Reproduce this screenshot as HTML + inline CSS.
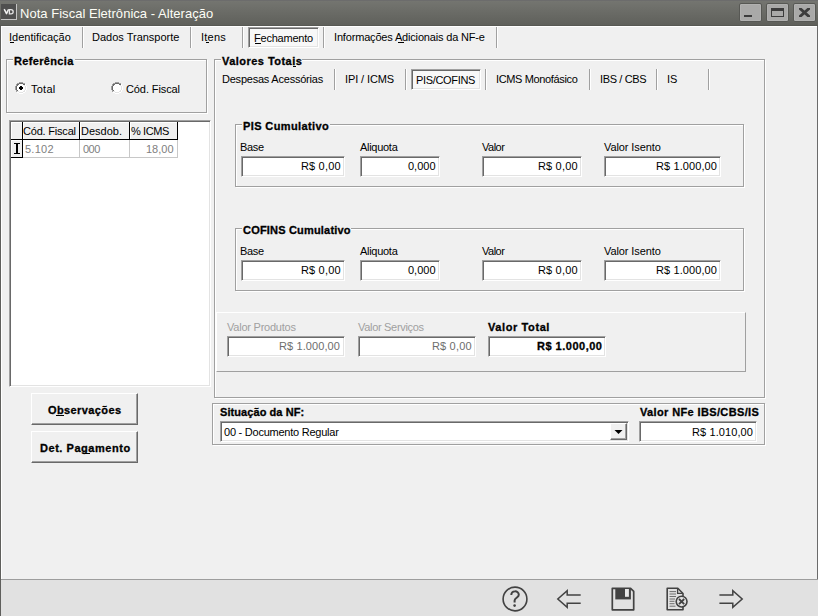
<!DOCTYPE html><html><head><meta charset="utf-8"><style>html,body{margin:0;padding:0;width:818px;height:616px;overflow:hidden;background:#f0f0f0;font-family:"Liberation Sans", sans-serif}#root div{position:absolute}.t{white-space:nowrap;font-family:"Liberation Sans", sans-serif}.tb{-webkit-text-stroke:0.3px currentColor}.tr{}</style></head><body><div id="root" style="position:absolute;left:0;top:0;width:818px;height:616px;overflow:hidden">
<div style="left:0px;top:0px;width:818px;height:26px;background:linear-gradient(#757671,#5e5f5a)"></div>
<div style="left:0px;top:0px;width:818px;height:1px;background:#6c6c6c"></div>
<div style="left:0px;top:25px;width:818px;height:1px;background:#575853"></div>
<div style="left:1px;top:4px;width:16px;height:16px;background:#4f4f4f;box-sizing:border-box;border-right:1px solid #c4c4c4;border-bottom:1px solid #c4c4c4"></div>
<svg style="position:absolute;left:0;top:0" width="20" height="22" viewBox="0 0 20 22"><path d="M4.2 9.2 L6.5 13.6 L8.6 9.2" fill="none" stroke="#f2f2f2" stroke-width="1.5" stroke-linejoin="round"/><path d="M9.4 9.6 H11 C13.9 9.6 13.9 13.9 11 13.9 H9.4 Z" fill="none" stroke="#e6e6e6" stroke-width="1.3"/></svg>
<div class="t tr" style="left:20px;top:3px;font-size:13px;line-height:21px;font-weight:normal;color:#fdfdf6;letter-spacing:0.03px;">Nota Fiscal Eletrônica - Alteração</div>
<div style="left:739px;top:3px;width:23px;height:19px;background:#a9a9a8;border-radius:2px;box-sizing:border-box;border:1px solid #575854;box-shadow:inset 0 0 0 1px #b1b1b0"></div>
<div style="left:766px;top:3px;width:23px;height:19px;background:#a9a9a8;border-radius:2px;box-sizing:border-box;border:1px solid #575854;box-shadow:inset 0 0 0 1px #b1b1b0"></div>
<div style="left:793px;top:3px;width:23px;height:19px;background:#a9a9a8;border-radius:2px;box-sizing:border-box;border:1px solid #575854;box-shadow:inset 0 0 0 1px #b1b1b0"></div>
<div style="left:744px;top:15px;width:8px;height:2px;background:#3c3c3c"></div>
<div style="left:771px;top:8px;width:13px;height:9px;box-sizing:border-box;border:1px solid #3c3c3c;border-top-width:3px"></div>
<svg style="position:absolute;left:799px;top:8px" width="11" height="9" viewBox="0 0 11 9"><path d="M-0.2 -0.6 L11.2 9.6 M11.2 -0.6 L-0.2 9.6" stroke="#3c3c3c" stroke-width="2.8"/></svg>
<div style="left:0px;top:26px;width:1px;height:590px;background:#5f5f5c"></div>
<div style="left:1px;top:26px;width:816px;height:1px;background:#ffffff"></div>
<div style="left:1px;top:26px;width:1px;height:553px;background:#ffffff"></div>
<div style="left:817px;top:26px;width:1px;height:554px;background:#6b6b6b"></div>
<div style="left:1px;top:579px;width:817px;height:37px;background:#e1e1e1"></div>
<div style="left:1px;top:579px;width:817px;height:1px;background:#9d9d9d"></div>
<div class="t tr" style="left:9px;top:27px;font-size:11px;line-height:20px;font-weight:normal;color:#000;letter-spacing:0.0px;">Identificação</div>
<div style="left:10px;top:42px;width:4px;height:1px;background:#000"></div>
<div style="left:82px;top:27px;width:1px;height:21px;background:#a0a0a0"></div>
<div style="left:83px;top:27px;width:1px;height:21px;background:#ffffff"></div>
<div class="t tr" style="left:92px;top:27px;font-size:11px;line-height:20px;font-weight:normal;color:#000;letter-spacing:0.0px;">Dados Transporte</div>
<div style="left:190px;top:27px;width:1px;height:21px;background:#a0a0a0"></div>
<div style="left:191px;top:27px;width:1px;height:21px;background:#ffffff"></div>
<div class="t tr" style="left:201px;top:27px;font-size:11px;line-height:20px;font-weight:normal;color:#000;letter-spacing:0.25px;">Itens</div>
<div style="left:206px;top:42px;width:3px;height:1px;background:#000"></div>
<div style="left:242px;top:27px;width:1px;height:21px;background:#a0a0a0"></div>
<div style="left:243px;top:27px;width:1px;height:21px;background:#ffffff"></div>
<div style="left:248px;top:27px;width:71px;height:21px;background:#f8f8f8;box-sizing:border-box;border:1px solid;border-color:#a0a0a0 #fff #fff #a0a0a0;box-shadow:inset 1px 1px 0 #696969, inset -1px -1px 0 #e3e3e3"></div>
<div class="t tr" style="left:254px;top:28px;font-size:11px;line-height:20px;font-weight:normal;color:#000;letter-spacing:-0.222px;">Fechamento</div>
<div style="left:255px;top:43px;width:6px;height:1px;background:#000"></div>
<div style="left:323px;top:27px;width:1px;height:21px;background:#a0a0a0"></div>
<div style="left:324px;top:27px;width:1px;height:21px;background:#ffffff"></div>
<div class="t tr" style="left:334px;top:27px;font-size:11px;line-height:20px;font-weight:normal;color:#000;letter-spacing:-0.172px;">Informações Adicionais da NF-e</div>
<div style="left:398px;top:42px;width:6px;height:1px;background:#000"></div>
<div style="left:496px;top:27px;width:1px;height:21px;background:#a0a0a0"></div>
<div style="left:497px;top:27px;width:1px;height:21px;background:#ffffff"></div>
<div style="left:7px;top:60px;width:201px;height:54px;box-shadow:inset 0 0 0 1px #ffffff"></div>
<div style="left:6px;top:59px;width:201px;height:54px;box-shadow:inset 0 0 0 1px #a0a0a0"></div>
<div style="left:13px;top:56px;width:62px;height:12px;background:#f0f0f0"></div>
<div class="t tb" style="left:14px;top:51px;font-size:11px;line-height:20px;font-weight:bold;color:#000;letter-spacing:0.333px;">Referência</div>
<svg style="position:absolute;left:15px;top:82px" width="12" height="12" shape-rendering="crispEdges"><rect x="4" y="0" width="1" height="1" fill="#a0a0a0"/><rect x="5" y="0" width="1" height="1" fill="#a0a0a0"/><rect x="6" y="0" width="1" height="1" fill="#a0a0a0"/><rect x="7" y="0" width="1" height="1" fill="#a0a0a0"/><rect x="2" y="1" width="1" height="1" fill="#a0a0a0"/><rect x="3" y="1" width="1" height="1" fill="#a0a0a0"/><rect x="4" y="1" width="1" height="1" fill="#696969"/><rect x="5" y="1" width="1" height="1" fill="#696969"/><rect x="6" y="1" width="1" height="1" fill="#696969"/><rect x="7" y="1" width="1" height="1" fill="#696969"/><rect x="8" y="1" width="1" height="1" fill="#a0a0a0"/><rect x="9" y="1" width="1" height="1" fill="#a0a0a0"/><rect x="1" y="2" width="1" height="1" fill="#a0a0a0"/><rect x="2" y="2" width="1" height="1" fill="#696969"/><rect x="3" y="2" width="1" height="1" fill="#696969"/><rect x="4" y="2" width="1" height="1" fill="#ffffff"/><rect x="5" y="2" width="1" height="1" fill="#ffffff"/><rect x="6" y="2" width="1" height="1" fill="#ffffff"/><rect x="7" y="2" width="1" height="1" fill="#ffffff"/><rect x="8" y="2" width="1" height="1" fill="#696969"/><rect x="9" y="2" width="1" height="1" fill="#696969"/><rect x="10" y="2" width="1" height="1" fill="#ffffff"/><rect x="1" y="3" width="1" height="1" fill="#a0a0a0"/><rect x="2" y="3" width="1" height="1" fill="#696969"/><rect x="3" y="3" width="1" height="1" fill="#ffffff"/><rect x="4" y="3" width="1" height="1" fill="#ffffff"/><rect x="5" y="3" width="1" height="1" fill="#ffffff"/><rect x="6" y="3" width="1" height="1" fill="#ffffff"/><rect x="7" y="3" width="1" height="1" fill="#ffffff"/><rect x="8" y="3" width="1" height="1" fill="#ffffff"/><rect x="9" y="3" width="1" height="1" fill="#e3e3e3"/><rect x="10" y="3" width="1" height="1" fill="#ffffff"/><rect x="0" y="4" width="1" height="1" fill="#a0a0a0"/><rect x="1" y="4" width="1" height="1" fill="#696969"/><rect x="2" y="4" width="1" height="1" fill="#ffffff"/><rect x="3" y="4" width="1" height="1" fill="#ffffff"/><rect x="4" y="4" width="1" height="1" fill="#ffffff"/><rect x="5" y="4" width="1" height="1" fill="#ffffff"/><rect x="6" y="4" width="1" height="1" fill="#ffffff"/><rect x="7" y="4" width="1" height="1" fill="#ffffff"/><rect x="8" y="4" width="1" height="1" fill="#ffffff"/><rect x="9" y="4" width="1" height="1" fill="#ffffff"/><rect x="10" y="4" width="1" height="1" fill="#e3e3e3"/><rect x="11" y="4" width="1" height="1" fill="#ffffff"/><rect x="0" y="5" width="1" height="1" fill="#a0a0a0"/><rect x="1" y="5" width="1" height="1" fill="#696969"/><rect x="2" y="5" width="1" height="1" fill="#ffffff"/><rect x="3" y="5" width="1" height="1" fill="#ffffff"/><rect x="4" y="5" width="1" height="1" fill="#ffffff"/><rect x="5" y="5" width="1" height="1" fill="#ffffff"/><rect x="6" y="5" width="1" height="1" fill="#ffffff"/><rect x="7" y="5" width="1" height="1" fill="#ffffff"/><rect x="8" y="5" width="1" height="1" fill="#ffffff"/><rect x="9" y="5" width="1" height="1" fill="#ffffff"/><rect x="10" y="5" width="1" height="1" fill="#e3e3e3"/><rect x="11" y="5" width="1" height="1" fill="#ffffff"/><rect x="0" y="6" width="1" height="1" fill="#a0a0a0"/><rect x="1" y="6" width="1" height="1" fill="#696969"/><rect x="2" y="6" width="1" height="1" fill="#ffffff"/><rect x="3" y="6" width="1" height="1" fill="#ffffff"/><rect x="4" y="6" width="1" height="1" fill="#ffffff"/><rect x="5" y="6" width="1" height="1" fill="#ffffff"/><rect x="6" y="6" width="1" height="1" fill="#ffffff"/><rect x="7" y="6" width="1" height="1" fill="#ffffff"/><rect x="8" y="6" width="1" height="1" fill="#ffffff"/><rect x="9" y="6" width="1" height="1" fill="#ffffff"/><rect x="10" y="6" width="1" height="1" fill="#e3e3e3"/><rect x="11" y="6" width="1" height="1" fill="#ffffff"/><rect x="0" y="7" width="1" height="1" fill="#a0a0a0"/><rect x="1" y="7" width="1" height="1" fill="#696969"/><rect x="2" y="7" width="1" height="1" fill="#ffffff"/><rect x="3" y="7" width="1" height="1" fill="#ffffff"/><rect x="4" y="7" width="1" height="1" fill="#ffffff"/><rect x="5" y="7" width="1" height="1" fill="#ffffff"/><rect x="6" y="7" width="1" height="1" fill="#ffffff"/><rect x="7" y="7" width="1" height="1" fill="#ffffff"/><rect x="8" y="7" width="1" height="1" fill="#ffffff"/><rect x="9" y="7" width="1" height="1" fill="#ffffff"/><rect x="10" y="7" width="1" height="1" fill="#e3e3e3"/><rect x="11" y="7" width="1" height="1" fill="#ffffff"/><rect x="1" y="8" width="1" height="1" fill="#a0a0a0"/><rect x="2" y="8" width="1" height="1" fill="#696969"/><rect x="3" y="8" width="1" height="1" fill="#ffffff"/><rect x="4" y="8" width="1" height="1" fill="#ffffff"/><rect x="5" y="8" width="1" height="1" fill="#ffffff"/><rect x="6" y="8" width="1" height="1" fill="#ffffff"/><rect x="7" y="8" width="1" height="1" fill="#ffffff"/><rect x="8" y="8" width="1" height="1" fill="#ffffff"/><rect x="9" y="8" width="1" height="1" fill="#e3e3e3"/><rect x="10" y="8" width="1" height="1" fill="#ffffff"/><rect x="1" y="9" width="1" height="1" fill="#a0a0a0"/><rect x="2" y="9" width="1" height="1" fill="#e3e3e3"/><rect x="3" y="9" width="1" height="1" fill="#e3e3e3"/><rect x="4" y="9" width="1" height="1" fill="#ffffff"/><rect x="5" y="9" width="1" height="1" fill="#ffffff"/><rect x="6" y="9" width="1" height="1" fill="#ffffff"/><rect x="7" y="9" width="1" height="1" fill="#ffffff"/><rect x="8" y="9" width="1" height="1" fill="#e3e3e3"/><rect x="9" y="9" width="1" height="1" fill="#e3e3e3"/><rect x="10" y="9" width="1" height="1" fill="#ffffff"/><rect x="2" y="10" width="1" height="1" fill="#ffffff"/><rect x="3" y="10" width="1" height="1" fill="#ffffff"/><rect x="4" y="10" width="1" height="1" fill="#e3e3e3"/><rect x="5" y="10" width="1" height="1" fill="#e3e3e3"/><rect x="6" y="10" width="1" height="1" fill="#e3e3e3"/><rect x="7" y="10" width="1" height="1" fill="#e3e3e3"/><rect x="8" y="10" width="1" height="1" fill="#ffffff"/><rect x="9" y="10" width="1" height="1" fill="#ffffff"/><rect x="4" y="11" width="1" height="1" fill="#ffffff"/><rect x="5" y="11" width="1" height="1" fill="#ffffff"/><rect x="6" y="11" width="1" height="1" fill="#ffffff"/><rect x="7" y="11" width="1" height="1" fill="#ffffff"/><rect x="5" y="4" width="1" height="1" fill="#000"/><rect x="6" y="4" width="1" height="1" fill="#000"/><rect x="4" y="5" width="1" height="1" fill="#000"/><rect x="5" y="5" width="1" height="1" fill="#000"/><rect x="6" y="5" width="1" height="1" fill="#000"/><rect x="7" y="5" width="1" height="1" fill="#000"/><rect x="4" y="6" width="1" height="1" fill="#000"/><rect x="5" y="6" width="1" height="1" fill="#000"/><rect x="6" y="6" width="1" height="1" fill="#000"/><rect x="7" y="6" width="1" height="1" fill="#000"/><rect x="5" y="7" width="1" height="1" fill="#000"/><rect x="6" y="7" width="1" height="1" fill="#000"/></svg>
<svg style="position:absolute;left:111px;top:82px" width="12" height="12" shape-rendering="crispEdges"><rect x="4" y="0" width="1" height="1" fill="#a0a0a0"/><rect x="5" y="0" width="1" height="1" fill="#a0a0a0"/><rect x="6" y="0" width="1" height="1" fill="#a0a0a0"/><rect x="7" y="0" width="1" height="1" fill="#a0a0a0"/><rect x="2" y="1" width="1" height="1" fill="#a0a0a0"/><rect x="3" y="1" width="1" height="1" fill="#a0a0a0"/><rect x="4" y="1" width="1" height="1" fill="#696969"/><rect x="5" y="1" width="1" height="1" fill="#696969"/><rect x="6" y="1" width="1" height="1" fill="#696969"/><rect x="7" y="1" width="1" height="1" fill="#696969"/><rect x="8" y="1" width="1" height="1" fill="#a0a0a0"/><rect x="9" y="1" width="1" height="1" fill="#a0a0a0"/><rect x="1" y="2" width="1" height="1" fill="#a0a0a0"/><rect x="2" y="2" width="1" height="1" fill="#696969"/><rect x="3" y="2" width="1" height="1" fill="#696969"/><rect x="4" y="2" width="1" height="1" fill="#ffffff"/><rect x="5" y="2" width="1" height="1" fill="#ffffff"/><rect x="6" y="2" width="1" height="1" fill="#ffffff"/><rect x="7" y="2" width="1" height="1" fill="#ffffff"/><rect x="8" y="2" width="1" height="1" fill="#696969"/><rect x="9" y="2" width="1" height="1" fill="#696969"/><rect x="10" y="2" width="1" height="1" fill="#ffffff"/><rect x="1" y="3" width="1" height="1" fill="#a0a0a0"/><rect x="2" y="3" width="1" height="1" fill="#696969"/><rect x="3" y="3" width="1" height="1" fill="#ffffff"/><rect x="4" y="3" width="1" height="1" fill="#ffffff"/><rect x="5" y="3" width="1" height="1" fill="#ffffff"/><rect x="6" y="3" width="1" height="1" fill="#ffffff"/><rect x="7" y="3" width="1" height="1" fill="#ffffff"/><rect x="8" y="3" width="1" height="1" fill="#ffffff"/><rect x="9" y="3" width="1" height="1" fill="#e3e3e3"/><rect x="10" y="3" width="1" height="1" fill="#ffffff"/><rect x="0" y="4" width="1" height="1" fill="#a0a0a0"/><rect x="1" y="4" width="1" height="1" fill="#696969"/><rect x="2" y="4" width="1" height="1" fill="#ffffff"/><rect x="3" y="4" width="1" height="1" fill="#ffffff"/><rect x="4" y="4" width="1" height="1" fill="#ffffff"/><rect x="5" y="4" width="1" height="1" fill="#ffffff"/><rect x="6" y="4" width="1" height="1" fill="#ffffff"/><rect x="7" y="4" width="1" height="1" fill="#ffffff"/><rect x="8" y="4" width="1" height="1" fill="#ffffff"/><rect x="9" y="4" width="1" height="1" fill="#ffffff"/><rect x="10" y="4" width="1" height="1" fill="#e3e3e3"/><rect x="11" y="4" width="1" height="1" fill="#ffffff"/><rect x="0" y="5" width="1" height="1" fill="#a0a0a0"/><rect x="1" y="5" width="1" height="1" fill="#696969"/><rect x="2" y="5" width="1" height="1" fill="#ffffff"/><rect x="3" y="5" width="1" height="1" fill="#ffffff"/><rect x="4" y="5" width="1" height="1" fill="#ffffff"/><rect x="5" y="5" width="1" height="1" fill="#ffffff"/><rect x="6" y="5" width="1" height="1" fill="#ffffff"/><rect x="7" y="5" width="1" height="1" fill="#ffffff"/><rect x="8" y="5" width="1" height="1" fill="#ffffff"/><rect x="9" y="5" width="1" height="1" fill="#ffffff"/><rect x="10" y="5" width="1" height="1" fill="#e3e3e3"/><rect x="11" y="5" width="1" height="1" fill="#ffffff"/><rect x="0" y="6" width="1" height="1" fill="#a0a0a0"/><rect x="1" y="6" width="1" height="1" fill="#696969"/><rect x="2" y="6" width="1" height="1" fill="#ffffff"/><rect x="3" y="6" width="1" height="1" fill="#ffffff"/><rect x="4" y="6" width="1" height="1" fill="#ffffff"/><rect x="5" y="6" width="1" height="1" fill="#ffffff"/><rect x="6" y="6" width="1" height="1" fill="#ffffff"/><rect x="7" y="6" width="1" height="1" fill="#ffffff"/><rect x="8" y="6" width="1" height="1" fill="#ffffff"/><rect x="9" y="6" width="1" height="1" fill="#ffffff"/><rect x="10" y="6" width="1" height="1" fill="#e3e3e3"/><rect x="11" y="6" width="1" height="1" fill="#ffffff"/><rect x="0" y="7" width="1" height="1" fill="#a0a0a0"/><rect x="1" y="7" width="1" height="1" fill="#696969"/><rect x="2" y="7" width="1" height="1" fill="#ffffff"/><rect x="3" y="7" width="1" height="1" fill="#ffffff"/><rect x="4" y="7" width="1" height="1" fill="#ffffff"/><rect x="5" y="7" width="1" height="1" fill="#ffffff"/><rect x="6" y="7" width="1" height="1" fill="#ffffff"/><rect x="7" y="7" width="1" height="1" fill="#ffffff"/><rect x="8" y="7" width="1" height="1" fill="#ffffff"/><rect x="9" y="7" width="1" height="1" fill="#ffffff"/><rect x="10" y="7" width="1" height="1" fill="#e3e3e3"/><rect x="11" y="7" width="1" height="1" fill="#ffffff"/><rect x="1" y="8" width="1" height="1" fill="#a0a0a0"/><rect x="2" y="8" width="1" height="1" fill="#696969"/><rect x="3" y="8" width="1" height="1" fill="#ffffff"/><rect x="4" y="8" width="1" height="1" fill="#ffffff"/><rect x="5" y="8" width="1" height="1" fill="#ffffff"/><rect x="6" y="8" width="1" height="1" fill="#ffffff"/><rect x="7" y="8" width="1" height="1" fill="#ffffff"/><rect x="8" y="8" width="1" height="1" fill="#ffffff"/><rect x="9" y="8" width="1" height="1" fill="#e3e3e3"/><rect x="10" y="8" width="1" height="1" fill="#ffffff"/><rect x="1" y="9" width="1" height="1" fill="#a0a0a0"/><rect x="2" y="9" width="1" height="1" fill="#e3e3e3"/><rect x="3" y="9" width="1" height="1" fill="#e3e3e3"/><rect x="4" y="9" width="1" height="1" fill="#ffffff"/><rect x="5" y="9" width="1" height="1" fill="#ffffff"/><rect x="6" y="9" width="1" height="1" fill="#ffffff"/><rect x="7" y="9" width="1" height="1" fill="#ffffff"/><rect x="8" y="9" width="1" height="1" fill="#e3e3e3"/><rect x="9" y="9" width="1" height="1" fill="#e3e3e3"/><rect x="10" y="9" width="1" height="1" fill="#ffffff"/><rect x="2" y="10" width="1" height="1" fill="#ffffff"/><rect x="3" y="10" width="1" height="1" fill="#ffffff"/><rect x="4" y="10" width="1" height="1" fill="#e3e3e3"/><rect x="5" y="10" width="1" height="1" fill="#e3e3e3"/><rect x="6" y="10" width="1" height="1" fill="#e3e3e3"/><rect x="7" y="10" width="1" height="1" fill="#e3e3e3"/><rect x="8" y="10" width="1" height="1" fill="#ffffff"/><rect x="9" y="10" width="1" height="1" fill="#ffffff"/><rect x="4" y="11" width="1" height="1" fill="#ffffff"/><rect x="5" y="11" width="1" height="1" fill="#ffffff"/><rect x="6" y="11" width="1" height="1" fill="#ffffff"/><rect x="7" y="11" width="1" height="1" fill="#ffffff"/></svg>
<div class="t tr" style="left:31px;top:79px;font-size:11px;line-height:20px;font-weight:normal;color:#000;letter-spacing:0.25px;">Total</div>
<div class="t tr" style="left:126px;top:79px;font-size:11px;line-height:20px;font-weight:normal;color:#000;letter-spacing:-0.1px;">Cód. Fiscal</div>
<div style="left:9px;top:120px;width:202px;height:267px;background:#fff;box-sizing:border-box;border:1px solid;border-color:#a0a0a0 #fff #fff #a0a0a0;box-shadow:inset 1px 1px 0 #696969, inset -1px -1px 0 #e3e3e3"></div>
<div style="left:11px;top:122px;width:12px;height:18px;background:#f0f0f0;box-sizing:border-box;border-right:1px solid #000;border-bottom:1px solid #000;box-shadow:inset 1px 1px 0 #fff"></div>
<div style="left:23px;top:122px;width:57px;height:18px;background:#f0f0f0;box-sizing:border-box;border-right:1px solid #000;border-bottom:1px solid #000;box-shadow:inset 1px 1px 0 #fff"></div>
<div style="left:80px;top:122px;width:50px;height:18px;background:#f0f0f0;box-sizing:border-box;border-right:1px solid #000;border-bottom:1px solid #000;box-shadow:inset 1px 1px 0 #fff"></div>
<div style="left:130px;top:122px;width:48px;height:18px;background:#f0f0f0;box-sizing:border-box;border-right:1px solid #000;border-bottom:1px solid #000;box-shadow:inset 1px 1px 0 #fff"></div>
<div class="t tr" style="left:23px;top:121px;font-size:11px;line-height:20px;font-weight:normal;color:#000;letter-spacing:-0.2px;">Cód. Fiscal</div>
<div class="t tr" style="left:81px;top:121px;font-size:11px;line-height:20px;font-weight:normal;color:#000;letter-spacing:0.0px;">Desdob.</div>
<div class="t tr" style="left:131px;top:121px;font-size:11px;line-height:20px;font-weight:normal;color:#000;letter-spacing:-0.4px;">% ICMS</div>
<div style="left:11px;top:140px;width:12px;height:18px;background:#f0f0f0;box-sizing:border-box;border-right:1px solid #000;border-bottom:1px solid #000;box-shadow:inset 1px 1px 0 #fff"></div>
<div style="left:23px;top:140px;width:57px;height:18px;box-sizing:border-box;border-right:1px solid #c8c8c8;border-bottom:1px solid #c8c8c8"></div>
<div style="left:80px;top:140px;width:50px;height:18px;box-sizing:border-box;border-right:1px solid #c8c8c8;border-bottom:1px solid #c8c8c8"></div>
<div style="left:130px;top:140px;width:48px;height:18px;box-sizing:border-box;border-right:1px solid #c8c8c8;border-bottom:1px solid #c8c8c8"></div>
<div style="left:14px;top:143px;width:6px;height:1px;background:#000"></div>
<div style="left:14px;top:153px;width:6px;height:1px;background:#000"></div>
<div style="left:16px;top:144px;width:2px;height:9px;background:#000"></div>
<div class="t tr" style="left:25px;top:139px;font-size:11px;line-height:20px;font-weight:normal;color:#808080;letter-spacing:0.25px;">5.102</div>
<div class="t tr" style="left:83px;top:139px;font-size:11px;line-height:20px;font-weight:normal;color:#808080;letter-spacing:-0.5px;">000</div>
<div class="t tr" style="left:146px;top:139px;font-size:11px;line-height:20px;font-weight:normal;color:#808080;letter-spacing:0.0px;">18,00</div>
<div style="left:31px;top:393px;width:107px;height:32px;background:#f0f0f0;box-sizing:border-box;border:1px solid;border-color:#fff #696969 #696969 #fff;box-shadow:inset -1px -1px 0 #a0a0a0"></div>
<div class="t tb" style="left:48px;top:400px;font-size:11px;line-height:20px;font-weight:bold;color:#000;letter-spacing:0.4px;">Observações</div>
<div style="left:56px;top:415px;width:8px;height:1px;background:#000"></div>
<div style="left:31px;top:431px;width:107px;height:32px;background:#f0f0f0;box-sizing:border-box;border:1px solid;border-color:#fff #696969 #696969 #fff;box-shadow:inset -1px -1px 0 #a0a0a0"></div>
<div class="t tb" style="left:40px;top:438px;font-size:11px;line-height:20px;font-weight:bold;color:#000;letter-spacing:0.538px;">Det. Pagamento</div>
<div style="left:83px;top:453px;width:7px;height:1px;background:#000"></div>
<div style="left:215px;top:60px;width:551px;height:339px;box-shadow:inset 0 0 0 1px #ffffff"></div>
<div style="left:214px;top:59px;width:551px;height:339px;box-shadow:inset 0 0 0 1px #a0a0a0"></div>
<div style="left:221px;top:56px;width:81px;height:12px;background:#f0f0f0"></div>
<div class="t tb" style="left:222px;top:51px;font-size:11px;line-height:20px;font-weight:bold;color:#000;letter-spacing:0.462px;">Valores Totais</div>
<div style="left:293px;top:66px;width:3px;height:1px;background:#000"></div>
<div class="t tr" style="left:222px;top:69px;font-size:11px;line-height:20px;font-weight:normal;color:#000;letter-spacing:-0.222px;">Despesas Acessórias</div>
<div style="left:334px;top:69px;width:1px;height:21px;background:#a0a0a0"></div>
<div style="left:335px;top:69px;width:1px;height:21px;background:#ffffff"></div>
<div class="t tr" style="left:345px;top:69px;font-size:11px;line-height:20px;font-weight:normal;color:#000;letter-spacing:-0.111px;">IPI / ICMS</div>
<div style="left:405px;top:69px;width:1px;height:21px;background:#a0a0a0"></div>
<div style="left:406px;top:69px;width:1px;height:21px;background:#ffffff"></div>
<div style="left:411px;top:69px;width:70px;height:21px;background:#f8f8f8;box-sizing:border-box;border:1px solid;border-color:#a0a0a0 #fff #fff #a0a0a0;box-shadow:inset 1px 1px 0 #696969, inset -1px -1px 0 #e3e3e3"></div>
<div class="t tr" style="left:416px;top:70px;font-size:11px;line-height:20px;font-weight:normal;color:#000;letter-spacing:-0.333px;">PIS/COFINS</div>
<div style="left:485px;top:69px;width:1px;height:21px;background:#a0a0a0"></div>
<div style="left:486px;top:69px;width:1px;height:21px;background:#ffffff"></div>
<div class="t tr" style="left:496px;top:69px;font-size:11px;line-height:20px;font-weight:normal;color:#000;letter-spacing:-0.357px;">ICMS Monofásico</div>
<div style="left:589px;top:69px;width:1px;height:21px;background:#a0a0a0"></div>
<div style="left:590px;top:69px;width:1px;height:21px;background:#ffffff"></div>
<div class="t tr" style="left:600px;top:69px;font-size:11px;line-height:20px;font-weight:normal;color:#000;letter-spacing:-0.375px;">IBS / CBS</div>
<div style="left:656px;top:69px;width:1px;height:21px;background:#a0a0a0"></div>
<div style="left:657px;top:69px;width:1px;height:21px;background:#ffffff"></div>
<div class="t tr" style="left:667px;top:69px;font-size:11px;line-height:20px;font-weight:normal;color:#000;letter-spacing:0.0px;">IS</div>
<div style="left:708px;top:69px;width:1px;height:21px;background:#a0a0a0"></div>
<div style="left:709px;top:69px;width:1px;height:21px;background:#ffffff"></div>
<div style="left:236px;top:125px;width:509px;height:63px;box-shadow:inset 0 0 0 1px #ffffff"></div>
<div style="left:235px;top:124px;width:509px;height:63px;box-shadow:inset 0 0 0 1px #a0a0a0"></div>
<div style="left:242px;top:121px;width:88px;height:12px;background:#f0f0f0"></div>
<div class="t tb" style="left:243px;top:116px;font-size:11px;line-height:20px;font-weight:bold;color:#000;letter-spacing:0.385px;">PIS Cumulativo</div>
<div class="t tr" style="left:240px;top:137px;font-size:11px;line-height:20px;font-weight:normal;color:#000;letter-spacing:-0.333px;">Base</div>
<div class="t tr" style="left:360px;top:137px;font-size:11px;line-height:20px;font-weight:normal;color:#000;letter-spacing:-0.286px;">Aliquota</div>
<div class="t tr" style="left:482px;top:137px;font-size:11px;line-height:20px;font-weight:normal;color:#000;letter-spacing:-0.5px;">Valor</div>
<div class="t tr" style="left:604px;top:137px;font-size:11px;line-height:20px;font-weight:normal;color:#000;letter-spacing:-0.091px;">Valor Isento</div>
<div style="left:241px;top:156px;width:104px;height:21px;background:#fff;box-sizing:border-box;border:1px solid;border-color:#a0a0a0 #fff #fff #a0a0a0;box-shadow:inset 1px 1px 0 #696969, inset -1px -1px 0 #e3e3e3"></div>
<div style="left:360px;top:156px;width:80px;height:21px;background:#fff;box-sizing:border-box;border:1px solid;border-color:#a0a0a0 #fff #fff #a0a0a0;box-shadow:inset 1px 1px 0 #696969, inset -1px -1px 0 #e3e3e3"></div>
<div style="left:482px;top:156px;width:100px;height:21px;background:#fff;box-sizing:border-box;border:1px solid;border-color:#a0a0a0 #fff #fff #a0a0a0;box-shadow:inset 1px 1px 0 #696969, inset -1px -1px 0 #e3e3e3"></div>
<div style="left:604px;top:156px;width:117px;height:21px;background:#fff;box-sizing:border-box;border:1px solid;border-color:#a0a0a0 #fff #fff #a0a0a0;box-shadow:inset 1px 1px 0 #696969, inset -1px -1px 0 #e3e3e3"></div>
<div class="t tr" style="left:301px;top:156px;font-size:11px;line-height:20px;font-weight:normal;color:#000;letter-spacing:0.167px;">R$ 0,00</div>
<div class="t tr" style="left:408px;top:156px;font-size:11px;line-height:20px;font-weight:normal;color:#000;letter-spacing:0.0px;">0,000</div>
<div class="t tr" style="left:538px;top:156px;font-size:11px;line-height:20px;font-weight:normal;color:#000;letter-spacing:0.167px;">R$ 0,00</div>
<div class="t tr" style="left:656px;top:156px;font-size:11px;line-height:20px;font-weight:normal;color:#000;letter-spacing:0.1px;">R$ 1.000,00</div>
<div style="left:236px;top:229px;width:509px;height:63px;box-shadow:inset 0 0 0 1px #ffffff"></div>
<div style="left:235px;top:228px;width:509px;height:63px;box-shadow:inset 0 0 0 1px #a0a0a0"></div>
<div style="left:242px;top:225px;width:109px;height:12px;background:#f0f0f0"></div>
<div class="t tb" style="left:243px;top:220px;font-size:11px;line-height:20px;font-weight:bold;color:#000;letter-spacing:0.188px;">COFINS Cumulativo</div>
<div class="t tr" style="left:240px;top:241px;font-size:11px;line-height:20px;font-weight:normal;color:#000;letter-spacing:-0.333px;">Base</div>
<div class="t tr" style="left:360px;top:241px;font-size:11px;line-height:20px;font-weight:normal;color:#000;letter-spacing:-0.286px;">Aliquota</div>
<div class="t tr" style="left:482px;top:241px;font-size:11px;line-height:20px;font-weight:normal;color:#000;letter-spacing:-0.5px;">Valor</div>
<div class="t tr" style="left:604px;top:241px;font-size:11px;line-height:20px;font-weight:normal;color:#000;letter-spacing:-0.091px;">Valor Isento</div>
<div style="left:241px;top:260px;width:104px;height:21px;background:#fff;box-sizing:border-box;border:1px solid;border-color:#a0a0a0 #fff #fff #a0a0a0;box-shadow:inset 1px 1px 0 #696969, inset -1px -1px 0 #e3e3e3"></div>
<div style="left:360px;top:260px;width:80px;height:21px;background:#fff;box-sizing:border-box;border:1px solid;border-color:#a0a0a0 #fff #fff #a0a0a0;box-shadow:inset 1px 1px 0 #696969, inset -1px -1px 0 #e3e3e3"></div>
<div style="left:482px;top:260px;width:100px;height:21px;background:#fff;box-sizing:border-box;border:1px solid;border-color:#a0a0a0 #fff #fff #a0a0a0;box-shadow:inset 1px 1px 0 #696969, inset -1px -1px 0 #e3e3e3"></div>
<div style="left:604px;top:260px;width:117px;height:21px;background:#fff;box-sizing:border-box;border:1px solid;border-color:#a0a0a0 #fff #fff #a0a0a0;box-shadow:inset 1px 1px 0 #696969, inset -1px -1px 0 #e3e3e3"></div>
<div class="t tr" style="left:301px;top:260px;font-size:11px;line-height:20px;font-weight:normal;color:#000;letter-spacing:0.167px;">R$ 0,00</div>
<div class="t tr" style="left:408px;top:260px;font-size:11px;line-height:20px;font-weight:normal;color:#000;letter-spacing:0.0px;">0,000</div>
<div class="t tr" style="left:538px;top:260px;font-size:11px;line-height:20px;font-weight:normal;color:#000;letter-spacing:0.167px;">R$ 0,00</div>
<div class="t tr" style="left:656px;top:260px;font-size:11px;line-height:20px;font-weight:normal;color:#000;letter-spacing:0.1px;">R$ 1.000,00</div>
<div style="left:216px;top:312px;width:530px;height:60px;box-sizing:border-box;border:1px solid;border-color:#fff #a0a0a0 #a0a0a0 #fff"></div>
<div class="t tr" style="left:227px;top:317px;font-size:11px;line-height:20px;font-weight:normal;color:#a0a0a0;letter-spacing:-0.231px;">Valor Produtos</div>
<div class="t tr" style="left:358px;top:317px;font-size:11px;line-height:20px;font-weight:normal;color:#a0a0a0;letter-spacing:-0.308px;">Valor Serviços</div>
<div class="t tb" style="left:488px;top:317px;font-size:11px;line-height:20px;font-weight:bold;color:#000;letter-spacing:0.6px;">Valor Total</div>
<div style="left:227px;top:336px;width:118px;height:21px;background:#fff;box-sizing:border-box;border:1px solid;border-color:#a0a0a0 #fff #fff #a0a0a0;box-shadow:inset 1px 1px 0 #696969, inset -1px -1px 0 #e3e3e3"></div>
<div style="left:358px;top:336px;width:118px;height:21px;background:#fff;box-sizing:border-box;border:1px solid;border-color:#a0a0a0 #fff #fff #a0a0a0;box-shadow:inset 1px 1px 0 #696969, inset -1px -1px 0 #e3e3e3"></div>
<div style="left:488px;top:336px;width:118px;height:21px;background:#fff;box-sizing:border-box;border:1px solid;border-color:#a0a0a0 #fff #fff #a0a0a0;box-shadow:inset 1px 1px 0 #696969, inset -1px -1px 0 #e3e3e3"></div>
<div class="t tr" style="left:279px;top:336px;font-size:11px;line-height:20px;font-weight:normal;color:#6d6d6d;letter-spacing:0.1px;">R$ 1.000,00</div>
<div class="t tr" style="left:432px;top:336px;font-size:11px;line-height:20px;font-weight:normal;color:#6d6d6d;letter-spacing:0.167px;">R$ 0,00</div>
<div class="t tb" style="left:537px;top:336px;font-size:11px;line-height:20px;font-weight:bold;color:#000;letter-spacing:0.5px;">R$ 1.000,00</div>
<div style="left:213px;top:404px;width:553px;height:42px;box-shadow:inset 0 0 0 1px #ffffff"></div>
<div style="left:212px;top:403px;width:553px;height:42px;box-shadow:inset 0 0 0 1px #a0a0a0"></div>
<div class="t tb" style="left:220px;top:402px;font-size:11px;line-height:20px;font-weight:bold;color:#000;letter-spacing:0.071px;">Situação da NF:</div>
<div class="t tb" style="left:640px;top:402px;font-size:11px;line-height:20px;font-weight:bold;color:#000;letter-spacing:0.368px;">Valor NFe IBS/CBS/IS</div>
<div style="left:220px;top:421px;width:409px;height:21px;background:#fff;box-sizing:border-box;border:1px solid;border-color:#a0a0a0 #fff #fff #a0a0a0;box-shadow:inset 1px 1px 0 #696969, inset -1px -1px 0 #e3e3e3"></div>
<div class="t tr" style="left:224px;top:422px;font-size:11px;line-height:20px;font-weight:normal;color:#000;letter-spacing:-0.238px;">00 - Documento Regular</div>
<div style="left:610px;top:423px;width:17px;height:17px;background:#f0f0f0;box-sizing:border-box;border:1px solid;border-color:#fff #696969 #696969 #fff;box-shadow:inset -1px -1px 0 #a0a0a0"></div>
<svg style="position:absolute;left:614px;top:429px" width="9" height="6" viewBox="0 0 9 6"><path d="M0.5 1 H8.5 L4.5 5 Z" fill="#000"/></svg>
<div style="left:639px;top:421px;width:118px;height:21px;background:#fff;box-sizing:border-box;border:1px solid;border-color:#a0a0a0 #fff #fff #a0a0a0;box-shadow:inset 1px 1px 0 #696969, inset -1px -1px 0 #e3e3e3"></div>
<div class="t tr" style="left:692px;top:422px;font-size:11px;line-height:20px;font-weight:normal;color:#000;letter-spacing:0.1px;">R$ 1.010,00</div>
<svg style="position:absolute;left:0;top:0" width="818" height="616" viewBox="0 0 818 616"><circle cx="515" cy="599" r="11.9" fill="none" stroke="#424242" stroke-width="1.6"/><path d="M511.3 595.0 C511.3 590.2 518.8 590.2 518.8 594.8 C518.8 597.6 514.6 598.0 514.6 600.6 V602.4" fill="none" stroke="#424242" stroke-width="2"/><circle cx="514.6" cy="605.6" r="1.3" fill="#424242"/><path d="M580.7 595 H567.2 V590.6 L557.8 599 L567.2 607.4 V603.3 H580.7" fill="none" stroke="#424242" stroke-width="1.5" stroke-linejoin="miter"/><path d="M719.4 595 H732.8 V590.6 L742.2 599 L732.8 607.4 V603.3 H719.4" fill="none" stroke="#424242" stroke-width="1.5" stroke-linejoin="miter"/><path d="M612.3 588.3 H630.6 L633.7 591.4 V609.8 H612.3 Z" fill="none" stroke="#424242" stroke-width="1.7" stroke-linejoin="round"/><rect x="615.3" y="588" width="15.6" height="11.4" fill="#424242"/><rect x="625" y="589" width="3.9" height="7.8" fill="#e8e8e8"/><path d="M667.2 588.3 H677.8 L683 593.5 V609.8 H667.2 Z" fill="none" stroke="#424242" stroke-width="1.6" stroke-linejoin="round"/><path d="M677.6 588.5 V593.4 H682.8" fill="none" stroke="#424242" stroke-width="1.3"/><path d="M669.5 591.6 H676 M669.5 594 H676 M669.5 596.5 H676 M669.5 599 H675 M669.5 601.3 H674.5 M669.5 603.7 H674.5 M669.5 606.2 H675.5" stroke="#6e6e6e" stroke-width="1"/><circle cx="681.6" cy="601.6" r="5.4" fill="#e1e1e1" stroke="#424242" stroke-width="1.6"/><path d="M679.0 599.0 L684.2 604.2 M684.2 599.0 L679.0 604.2" stroke="#424242" stroke-width="1.8"/></svg>
</div></body></html>
